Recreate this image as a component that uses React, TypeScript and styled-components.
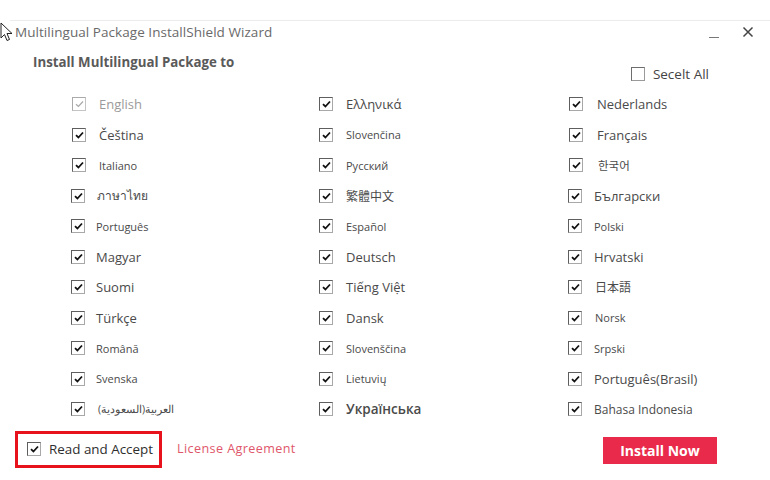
import React from "react";
import styled, { createGlobalStyle } from "styled-components";

const Global = createGlobalStyle`
  html, body { margin: 0; padding: 0; background: #fff; }
  body { font-family: "Open Sans", "Noto Sans", "Noto Sans CJK JP", sans-serif; }
`;

const Window = styled.div`
  width: 770px;
  height: 480px;
  background: #fff;
  display: flex;
  flex-direction: column;
  position: relative;
  overflow: hidden;
`;

const TitleBar = styled.div`
  margin-top: 20px;
  margin-left: 10px;
  border-top: 1px solid #ececec;
  height: 22px;
  display: flex;
  align-items: center;
  gap: 17px;
  padding-left: 5px;
  padding-right: 14px;
  color: #6a6a6a;
`;

const Title = styled.div`
  flex: 1;
  font-size: 13.5px;
  letter-spacing: 0.05px;
`;

const WinButton = styled.div<{ $w: number; $dy: number }>`
  width: ${(p) => p.$w}px;
  display: flex;
  justify-content: center;
  align-items: center;
  margin-top: ${(p) => p.$dy}px;
  color: #555;
`;

const Header = styled.div`
  display: flex;
  justify-content: space-between;
  padding: 10px 61px 0 33px;
  height: 36px;
`;

const Heading = styled.div`
  font-size: 13.3px;
  font-weight: 700;
  color: #5a5a5a;
  line-height: 18px;
`;

const SelectAll = styled.label`
  display: flex;
  align-items: center;
  gap: 8px;
  margin-top: 12px;
  font-size: 13.5px;
  color: #444;
  height: 18px;
`;

const EmptyBox = styled.span`
  width: 14px;
  height: 14px;
  border: 1px solid #9a9a9a;
  border-top-color: #6e6e6e;
  border-left-color: #6e6e6e;
  box-sizing: border-box;
`;

const Grid = styled.div`
  display: grid;
  grid-template-columns: 247px 250px 180px;
  grid-auto-rows: 30.5px;
  padding-left: 72px;
`;

const Item = styled.div<{ $dx: number }>`
  display: flex;
  align-items: center;
  margin-left: ${(p) => p.$dx}px;
`;

const Box = styled.span<{ $disabled?: boolean }>`
  width: 14px;
  height: 14px;
  flex: none;
  box-sizing: border-box;
  border: 1px solid ${(p) => (p.$disabled ? "#c4c4c4" : "#a8a8a8")};
  border-top-color: ${(p) => (p.$disabled ? "#aaa" : "#5e5e5e")};
  border-left-color: ${(p) => (p.$disabled ? "#aaa" : "#5e5e5e")};
  display: flex;
  align-items: center;
  justify-content: center;
  background: #fff;
`;

const Label = styled.span<{ $size: number; $gap: number; $bold?: boolean; $muted?: boolean }>`
  margin-left: ${(p) => p.$gap}px;
  font-size: ${(p) => p.$size}px;
  font-weight: ${(p) => (p.$bold ? 600 : 400)};
  color: ${(p) => (p.$muted ? "#9a9a9a" : "#4a4a4a")};
  white-space: nowrap;
`;

const Footer = styled.div`
  display: flex;
  align-items: center;
  padding: 0 53px 0 15px;
  margin-top: 6px;
`;

const AcceptFrame = styled.div`
  width: 147px;
  height: 37px;
  box-sizing: border-box;
  border: 3px solid #e8121d;
  display: flex;
  align-items: center;
  padding-left: 9px;
  gap: 8px;
`;

const AcceptText = styled.span`
  font-size: 13.4px;
  color: #2e2e2e;
  white-space: nowrap;
`;

const License = styled.span`
  margin-left: 15px;
  font-size: 12.6px;
  letter-spacing: 0.4px;
  color: #e0566a;
  flex: 1;
  margin-top: -2px;
`;

const InstallButton = styled.button`
  width: 114px;
  height: 27px;
  border: none;
  background: #ea2a4b;
  color: #fff;
  font-family: inherit;
  font-size: 14px;
  font-weight: 700;
  padding: 0;
  margin-top: 2px;
`;

const Cursor = styled.svg`
  position: absolute;
  left: 0;
  top: 22px;
`;

const Check = ({ muted }: { muted?: boolean }) => (
  <svg width="9" height="8" viewBox="0 0 9 8">
    <path
      d="M1 4.2 L3.4 6.5 L8 1.5"
      fill="none"
      stroke={muted ? "#a8a8a8" : "#111"}
      strokeWidth={muted ? 1.2 : 1.8}
    />
  </svg>
);

type Lang = { t: string; s: number; g?: number; dx?: number; b?: boolean; m?: boolean };

const langs: Lang[] = [
  { t: "English", s: 13, g: 13, m: true },
  { t: "Ελληνικά", s: 13, g: 13 },
  { t: "Nederlands", s: 13, g: 14 },
  { t: "Čeština", s: 13, g: 13 },
  { t: "Slovenčina", s: 11, g: 13 },
  { t: "Français", s: 13, g: 14 },
  { t: "Italiano", s: 11, g: 13 },
  { t: "Русский", s: 11, g: 13 },
  { t: "한국어", s: 11.5, g: 15 },
  { t: "ภาษาไทย", s: 12, g: 12, dx: -1 },
  { t: "繁體中文", s: 12, g: 13 },
  { t: "Български", s: 13, g: 12, dx: -1 },
  { t: "Português", s: 11, g: 11, dx: -1 },
  { t: "Español", s: 11, g: 13 },
  { t: "Polski", s: 11, g: 12, dx: -1 },
  { t: "Magyar", s: 13, g: 11, dx: -1 },
  { t: "Deutsch", s: 13, g: 13 },
  { t: "Hrvatski", s: 13, g: 12, dx: -1 },
  { t: "Suomi", s: 13, g: 11, dx: -1 },
  { t: "Tiếng Việt", s: 13, g: 13 },
  { t: "日本語", s: 12, g: 13, dx: -1 },
  { t: "Türkçe", s: 13, g: 11, dx: -1 },
  { t: "Dansk", s: 13, g: 13 },
  { t: "Norsk", s: 11, g: 13, dx: -1 },
  { t: "Română", s: 11, g: 11, dx: -1 },
  { t: "Slovenščina", s: 11, g: 13 },
  { t: "Srpski", s: 11, g: 12, dx: -1 },
  { t: "Svenska", s: 11, g: 11, dx: -1 },
  { t: "Lietuvių", s: 11, g: 13 },
  { t: "Português(Brasil)", s: 13, g: 12, dx: -1 },
  { t: "العربية(السعودية)", s: 10.5, g: 13, dx: -1 },
  { t: "Українська", s: 13.5, g: 13, b: true },
  { t: "Bahasa Indonesia", s: 12, g: 12, dx: -1 },
];

export default function App() {
  return (
    <>
      <Global />
      <Window>
        <Cursor width="14" height="20" viewBox="0 0 14 20">
          <path d="M1 1 L1 16 L4.5 12.5 L7 18.5 L9.5 17.5 L7 11.5 L12 11.5 Z" fill="#fff" stroke="#222" strokeWidth="1" />
        </Cursor>
        <TitleBar>
          <Title>Multilingual Package InstallShield Wizard</Title>
          <WinButton $w={18} $dy={4}>
            <svg width="12" height="12" viewBox="0 0 12 12">
              <path d="M1 9.5 H11" stroke="#777" strokeWidth="1" />
            </svg>
          </WinButton>
          <WinButton $w={16} $dy={0}>
            <svg width="12" height="12" viewBox="0 0 12 12">
              <path d="M1.5 1.5 L10.5 10.5 M10.5 1.5 L1.5 10.5" stroke="#444" strokeWidth="1.5" />
            </svg>
          </WinButton>
        </TitleBar>
        <Header>
          <Heading>Install Multilingual Package to</Heading>
          <SelectAll>
            <EmptyBox />
            Secelt All
          </SelectAll>
        </Header>
        <Grid>
          {langs.map((l) => (
            <Item key={l.t} $dx={l.dx ?? 0}>
              <Box $disabled={l.m}>
                <Check muted={l.m} />
              </Box>
              <Label $size={l.s} $gap={l.g ?? 13} $bold={l.b} $muted={l.m} dir="auto">
                {l.t}
              </Label>
            </Item>
          ))}
        </Grid>
        <Footer>
          <AcceptFrame>
            <Box>
              <Check />
            </Box>
            <AcceptText>Read and Accept</AcceptText>
          </AcceptFrame>
          <License>License Agreement</License>
          <InstallButton>Install Now</InstallButton>
        </Footer>
      </Window>
    </>
  );
}
